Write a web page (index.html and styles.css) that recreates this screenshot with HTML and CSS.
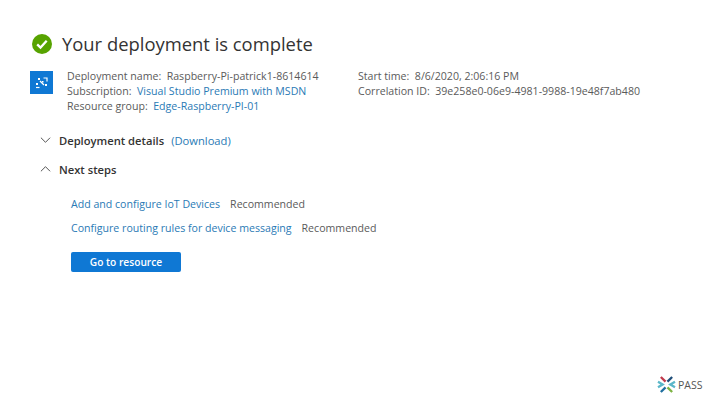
FILE: index.html
```
<!DOCTYPE html>
<html lang="en">
<head>
<meta charset="utf-8">
<title>Your deployment is complete</title>
<link rel="stylesheet" href="styles.css">
</head>
<body>
<main class="page">
  <header class="title-row">
    <svg class="check" viewBox="0 0 20 20" aria-hidden="true"><circle cx="10" cy="10" r="10" fill="#57a300"/><path d="M5.2 10.4l3.3 3.2 6.2-6.8" fill="none" stroke="#fff" stroke-width="2.3"/></svg>
    <h1>Your deployment is complete</h1>
  </header>
  <section class="summary">
    <div class="res-icon">
      <svg viewBox="0 0 23 23" aria-hidden="true"><g fill="none" stroke="#fff" stroke-width="1.2"><path d="M10 10l4 4"/><path d="M13.500 7h3.500v3.500"/><path d="M6 16.500h3.500"/></g><g fill="#fff"><rect x="8" y="7" width="2" height="2"/><rect x="6" y="12" width="2" height="2"/><rect x="15" y="13" width="2" height="2"/><rect x="12" y="10" width="1.500" height="1.500"/></g></svg>
    </div>
    <div class="col-a">
      <div>Deployment name:&nbsp; Raspberry-Pi-patrick1-8614614</div>
      <div>Subscription:&nbsp; <a>Visual Studio Premium with MSDN</a></div>
      <div>Resource group:&nbsp; <a>Edge-Raspberry-PI-01</a></div>
    </div>
    <div class="col-b">
      <div>Start time:&nbsp; 8/6/2020, 2:06:16 PM</div>
      <div>Correlation ID:&nbsp; 39e258e0-06e9-4981-9988-19e48f7ab480</div>
    </div>
  </section>
  <section class="sections">
    <div class="sec-row">
      <svg class="chev" viewBox="0 0 12 8" aria-hidden="true"><path d="M1 1.500l5 5 5-5" fill="none" stroke="#444" stroke-width="1"/></svg>
      <strong>Deployment details</strong><a class="dl">(Download)</a>
    </div>
    <div class="sec-row">
      <svg class="chev" viewBox="0 0 12 8" aria-hidden="true"><path d="M1 6.500l5-5 5 5" fill="none" stroke="#444" stroke-width="1"/></svg>
      <strong>Next steps</strong>
    </div>
  </section>
  <section class="steps">
    <div class="step"><a>Add and configure IoT Devices</a><span>Recommended</span></div>
    <div class="step"><a>Configure routing rules for device messaging</a><span>Recommended</span></div>
    <button class="go" type="button">Go to resource</button>
  </section>
  <footer class="logo">
    <svg viewBox="0 0 20 18" aria-hidden="true"><g fill="none" stroke-width="2.400"><path d="M4 1l5 5" stroke="#c0394b"/><path d="M16 1l-5 5" stroke="#1f4e79"/><path d="M1 6l5 3-5 3" stroke="#5bb7c9"/><path d="M19 6l-5 3 5 3" stroke="#5bb7c9"/><path d="M4 17l5-5" stroke="#1f6f9f"/><path d="M16 17l-5-5" stroke="#7db343"/></g></svg>
    <span>PASS</span>
  </footer>
</main>
</body>
</html>
```
FILE: styles.css
```
* { box-sizing: border-box; }
html, body { margin: 0; padding: 0; background: #fff; }
.page {
  position: relative;
  width: 720px;
  height: 405px;
  overflow: hidden;
  padding: 33px 0 0 32px;
  font-family: "Open Sans", "Noto Sans", sans-serif;
  font-size: 10.600px;
  color: #5a5a5a;
}
a { color: #2a7ab5; }
.title-row { display: flex; align-items: center; height: 22px; gap: 10px; }
.check { width: 20px; height: 20px; }
h1 { margin: -2px 0 0; font-size: 18.400px; font-weight: 400; color: #333; white-space: nowrap; }
.summary { display: flex; margin-top: 14px; line-height: 15px; }
.res-icon { width: 23px; height: 23px; margin: 2px 14px 0 -2px; background: #0f78d4; }
.res-icon svg { display: block; width: 23px; height: 23px; }
.col-a { width: 291px; white-space: nowrap; }
.col-b { white-space: nowrap; }
.sections { margin: 18px 0 0 8px; }
.sec-row { display: flex; align-items: center; height: 16px; margin-bottom: 13px; color: #333; }
.sec-row strong { font-weight: 600; margin-left: 8px; font-size: 11.200px; }
.chev { width: 11px; height: 8px; }
.dl { margin-left: 7px; font-size: 11.200px; }
.steps { margin: 15px 0 0 39px; display: flex; flex-direction: column; align-items: flex-start; }
.step { height: 24px; display: flex; align-items: center; gap: 10px; white-space: nowrap; }
.go {
  margin-top: 12px;
  width: 110px;
  height: 20px;
  border: 0;
  border-radius: 2px;
  background: #0f78d4;
  color: #fff;
  font: 600 10.200px "Open Sans", "Noto Sans", sans-serif;
  padding: 0;
}
.logo { position: absolute; left: 657px; top: 376px; display: flex; align-items: center; gap: 2px; font-size: 10.500px; color: #555; }
.logo svg { width: 19px; height: 17px; }
```
